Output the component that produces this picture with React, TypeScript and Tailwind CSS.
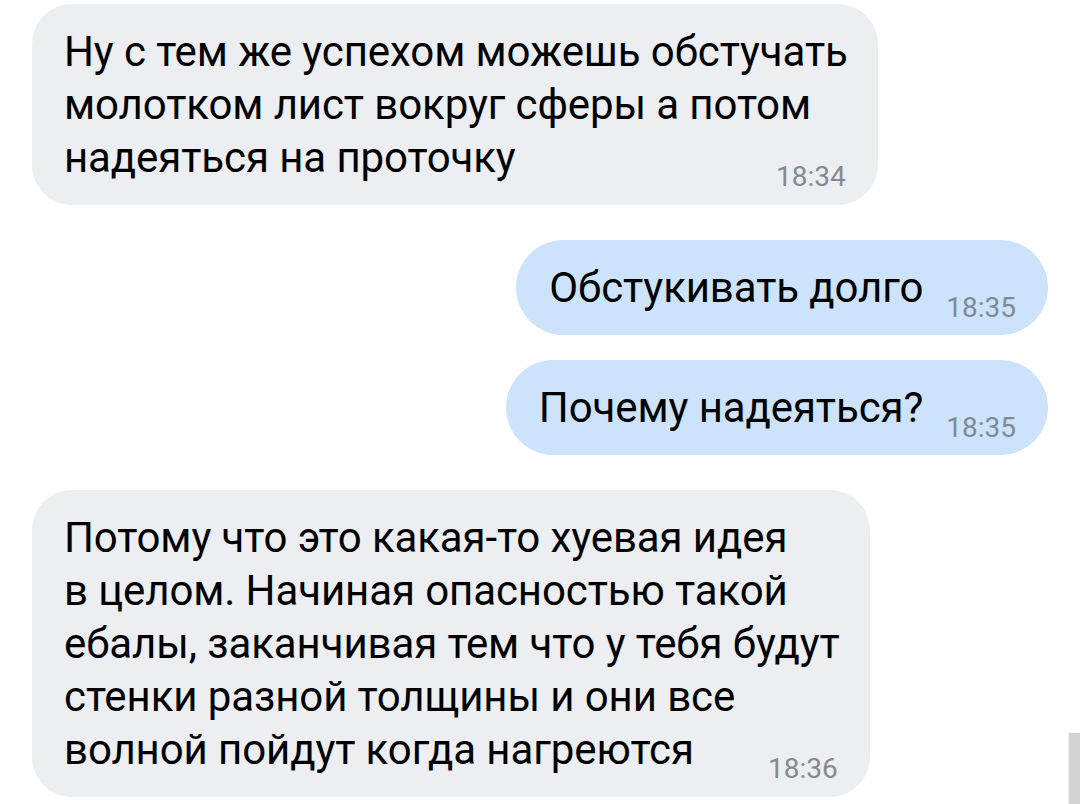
import React from 'react';

const font = { fontFamily: 'Roboto, "Noto Sans", sans-serif' };

function Incoming({ lines, time }: { lines: string[]; time: string }) {
  return (
    <div className="relative self-start ml-[32px] bg-[#eceef1] rounded-[40px] pl-[32px] pr-[30px] py-[21px]">
      <div className="text-[42px] leading-[53px] tracking-[-0.1px] text-black whitespace-nowrap">
        {lines.map((l, i) => (
          <div key={i}>{l}</div>
        ))}
      </div>
      <span className="absolute right-[32px] bottom-[14px] text-[28px] leading-none text-[#858a90]">{time}</span>
    </div>
  );
}

function Outgoing({ text, time }: { text: string; time: string }) {
  return (
    <div className="self-end mr-[32px] h-[95px] bg-[#cde3fb] rounded-full pl-[33px] pr-[32px] flex items-center gap-[23px]">
      <span className="text-[42px] leading-none tracking-[-0.1px] text-black whitespace-nowrap">{text}</span>
      <span className="self-end mb-[13px] text-[28px] leading-none text-[#7f8a96]">{time}</span>
    </div>
  );
}

export default function App() {
  return (
    <div className="relative w-[1080px] h-[804px] bg-white overflow-hidden" style={font}>
      <div className="flex flex-col pt-[4px]">
        <Incoming
          lines={[
            'Ну с тем же успехом можешь обстучать',
            'молотком лист вокруг сферы а потом',
            'надеяться на проточку',
          ]}
          time="18:34"
        />
        <div className="h-[35px]" />
        <Outgoing text="Обстукивать долго" time="18:35" />
        <div className="h-[25px]" />
        <Outgoing text="Почему надеяться?" time="18:35" />
        <div className="h-[35px]" />
        <Incoming
          lines={[
            'Потому что это какая-то хуевая идея',
            'в целом. Начиная опасностью такой',
            'ебалы, заканчивая тем что у тебя будут',
            'стенки разной толщины и они все',
            'волной пойдут когда нагреются',
          ]}
          time="18:36"
        />
      </div>
      {/* scrollbar remnant */}
      <div className="absolute right-[11px] top-[733px] w-px h-[71px] bg-[#f0f0f0]" />
      <div className="absolute right-0 top-[733px] w-[11px] h-[71px] bg-[#d3d3d3]" />
    </div>
  );
}
